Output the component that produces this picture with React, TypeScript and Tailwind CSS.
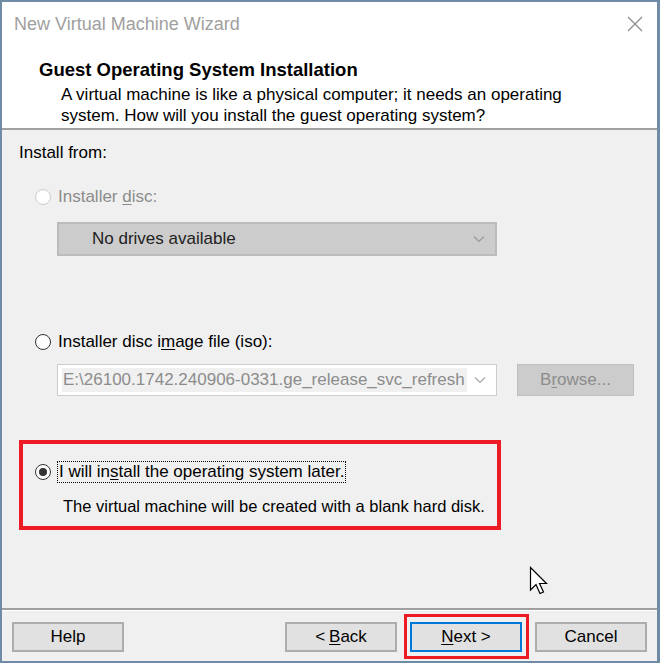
import React from "react";

const font = { fontFamily: '"Liberation Sans", Arial, sans-serif' };

function Radio({ checked, disabled }: { checked?: boolean; disabled?: boolean }) {
  return (
    <span
      className={`flex h-[16px] w-[16px] shrink-0 items-center justify-center rounded-full border bg-white ${
        disabled ? "border-[#cccccc]" : "border-[#333333]"
      }`}
    >
      {checked && <span className="h-[8px] w-[8px] rounded-full bg-[#333333]" />}
    </span>
  );
}

function Chevron({ color }: { color: string }) {
  return (
    <svg width="12" height="8" viewBox="0 0 12 8">
      <path d="M1 1.5 L6 6.5 L11 1.5" fill="none" stroke={color} strokeWidth="1.2" />
    </svg>
  );
}

function Btn({ children, focused }: { children: React.ReactNode; focused?: boolean }) {
  return (
    <div
      className={`relative flex h-[30px] w-[112px] items-center justify-center bg-[#e1e1e1] text-[17px] leading-[20px] text-black ${
        focused ? "border-2 border-[#0078d7]" : "border-2 border-[#adadad]"
      }`}
    >
      {children}
    </div>
  );
}

export default function App() {
  return (
    <div
      style={font}
      className="relative flex h-[663px] w-[660px] flex-col overflow-hidden border-t-2 border-b-2 border-l-2 border-r-[3px] border-[#6f8ba6] bg-[#f0f0f0] text-[17px] text-black"
    >
      {/* Title + header */}
      <div className="flex h-[126px] flex-col bg-white">
        <div className="flex h-[44px] items-center justify-between pl-[12px] pr-[14px]">
          <span className="text-[18px] text-[#a0a0a0]">New Virtual Machine Wizard</span>
          <svg width="16" height="16" viewBox="0 0 16 16">
            <path d="M1 1 L15 15 M15 1 L1 15" stroke="#8a8a8a" strokeWidth="1.2" />
          </svg>
        </div>
        <div className="pl-[37px] pt-[14px] text-[18.5px] font-bold leading-[20px]">
          Guest Operating System Installation
        </div>
        <div className="pl-[59px] pt-[4px] leading-[21px]">
          A virtual machine is like a physical computer; it needs an operating
          <br />
          system. How will you install the guest operating system?
        </div>
      </div>
      <div className="h-[2px] bg-[#a0a0a0]" />

      {/* Body */}
      <div className="flex flex-1 flex-col">
        <div className="pl-[17px] pt-[13px] leading-[20px]">Install from:</div>

        <div className="mt-[24px] flex items-center gap-[7px] pl-[33px] leading-[20px] text-[#8c8c8c]">
          <Radio disabled />
          <span>
            Installer <span className="underline underline-offset-2">d</span>isc:
          </span>
        </div>

        <div className="ml-[55px] mt-[15px] flex h-[34px] w-[440px] items-center justify-between border-2 border-[#bcbcbc] bg-[#cccccc] pl-[33px] pr-[10px]">
          <span className="text-[#222222]">No drives available</span>
          <Chevron color="#9a9a9a" />
        </div>

        <div className="mt-[76px] flex items-center gap-[7px] pl-[33px] leading-[20px]">
          <Radio />
          <span>
            Installer disc i<span className="underline underline-offset-2">m</span>age file (iso):
          </span>
        </div>

        <div className="mt-[12px] flex items-center">
          <div className="ml-[55px] flex h-[32px] w-[440px] items-center justify-between border border-[#cccccc] bg-white py-[3px] pl-[4px] pr-[10px]">
            <span className="flex h-full w-[405px] items-center overflow-hidden whitespace-nowrap bg-[#f0f0f0] pl-[1px] text-[#8c8c8c]">
              E:\26100.1742.240906-0331.ge_release_svc_refresh
            </span>
            <Chevron color="#a8a8a8" />
          </div>
          <div className="ml-[20px] flex h-[32px] w-[117px] items-center justify-center border border-[#bfbfbf] bg-[#cccccc] text-[#8c8c8c]">
            B<span className="underline underline-offset-2">r</span>owse...
          </div>
        </div>

        <div className="ml-[17px] mt-[44px] flex h-[90px] w-[482px] flex-col border-[4px] border-[#ed1c24] pt-[17px]">
          <div className="flex items-center gap-[6px] pl-[12px] leading-[20px]">
            <Radio checked />
            <span className="border border-dotted border-black px-[1px] leading-[20px]">
              I will in<span className="underline underline-offset-2">s</span>tall the operating system later.
            </span>
          </div>
          <div className="whitespace-nowrap pl-[40px] pt-[13px] text-[16.5px] leading-[20px]">
            The virtual machine will be created with a blank hard disk.
          </div>
        </div>
      </div>

      {/* Footer */}
      <div className="h-[2px] bg-[#a0a0a0]" />
      <div className="h-[1px] bg-white" />
      <div className="flex h-[50px] items-start pl-[10px] pt-[11px]">
        <Btn>Help</Btn>
        <div className="ml-[161px]">
          <Btn>
            &lt; <span className="ml-[4px] underline underline-offset-2">B</span>ack
          </Btn>
        </div>
        <div className="relative ml-[13px]">
          <Btn focused>
            <span className="underline underline-offset-2">N</span>ext &gt;
          </Btn>
          <div className="pointer-events-none absolute bottom-[-7px] left-[-6px] right-[-7px] top-[-8px] border-[3px] border-[#ed1c24]" />
        </div>
        <div className="ml-[13px]">
          <Btn>Cancel</Btn>
        </div>
      </div>

      {/* Mouse cursor */}
      <svg
        className="absolute left-[527px] top-[564px]"
        width="20"
        height="32"
        viewBox="0 0 20 32"
      >
        <path
          d="M1.5 1.5 L1.5 24 L7 18.5 L11 27.5 L14.5 26 L10.5 17.5 L17.5 17.5 Z"
          fill="white"
          stroke="black"
          strokeWidth="1.2"
          strokeLinejoin="miter"
        />
      </svg>
    </div>
  );
}
